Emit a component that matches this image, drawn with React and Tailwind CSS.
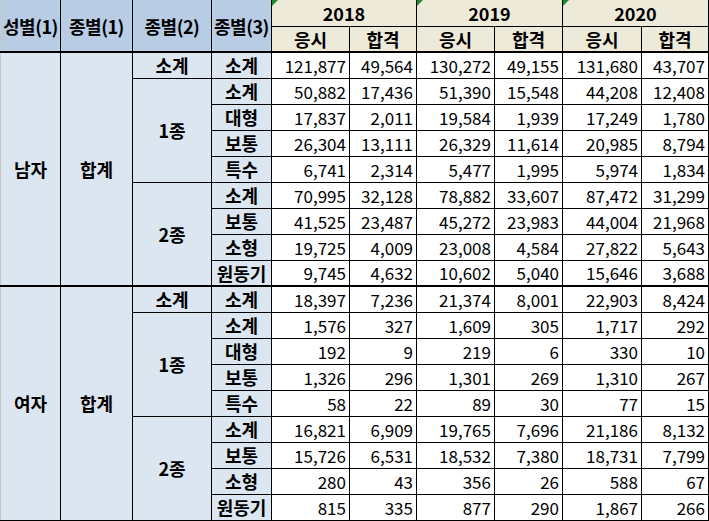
import React from 'react';

const years = ['2018', '2019', '2020'];

// [종별(2), 종별(3), values...]
const male = [
    ['소계', '소계', '121,877', '49,564', '130,272', '49,155', '131,680', '43,707'],
    ['1종', '소계', '50,882', '17,436', '51,390', '15,548', '44,208', '12,408'],
    ['1종', '대형', '17,837', '2,011', '19,584', '1,939', '17,249', '1,780'],
    ['1종', '보통', '26,304', '13,111', '26,329', '11,614', '20,985', '8,794'],
    ['1종', '특수', '6,741', '2,314', '5,477', '1,995', '5,974', '1,834'],
    ['2종', '소계', '70,995', '32,128', '78,882', '33,607', '87,472', '31,299'],
    ['2종', '보통', '41,525', '23,487', '45,272', '23,983', '44,004', '21,968'],
    ['2종', '소형', '19,725', '4,009', '23,008', '4,584', '27,822', '5,643'],
    ['2종', '원동기', '9,745', '4,632', '10,602', '5,040', '15,646', '3,688'],
];

const female = [
    ['소계', '소계', '18,397', '7,236', '21,374', '8,001', '22,903', '8,424'],
    ['1종', '소계', '1,576', '327', '1,609', '305', '1,717', '292'],
    ['1종', '대형', '192', '9', '219', '6', '330', '10'],
    ['1종', '보통', '1,326', '296', '1,301', '269', '1,310', '267'],
    ['1종', '특수', '58', '22', '89', '30', '77', '15'],
    ['2종', '소계', '16,821', '6,909', '19,765', '7,696', '21,186', '8,132'],
    ['2종', '보통', '15,726', '6,531', '18,532', '7,380', '18,731', '7,799'],
    ['2종', '소형', '280', '43', '356', '26', '588', '67'],
    ['2종', '원동기', '815', '335', '877', '290', '1,867', '266'],
];

const spans = { 0: 1, 1: 4, 5: 4 };

const label = 'border border-black bg-[#dce6f1] font-bold text-[18px] text-center align-middle whitespace-nowrap';
const num = 'border border-black bg-white text-[17px] text-right pr-[3px] align-middle';

const Group = ({ sex, rows }) => (
    <>
        {rows.map((r, i) => (
            <tr key={i} className="h-[26px]">
                {i === 0 && (
                    <>
                        <td rowSpan={rows.length} className={`${label} border-l-[#c8c8c8] border-t-2`}>{sex}</td>
                        <td rowSpan={rows.length} className={`${label} border-t-2`}>합계</td>
                    </>
                )}
                {spans[i] && (
                    <td rowSpan={spans[i]} className={`${label} ${i === 0 ? 'border-t-2' : ''}`}>{r[0]}</td>
                )}
                <td className={`${label} ${i === 0 ? 'border-t-2' : ''}`}>{r[1]}</td>
                {r.slice(2).map((v, j) => (
                    <td key={j} className={`${num} ${i === 0 ? 'border-t-2' : ''}`}>{v}</td>
                ))}
            </tr>
        ))}
    </>
);

export default function App() {
    return (
        <div className="w-[709px] h-[521px] bg-white overflow-hidden" style={{ fontFamily: '"Noto Sans CJK KR", "Noto Sans", sans-serif' }}>
            <table className="table-fixed border-collapse leading-none text-black">
                <colgroup>
                    <col className="w-[60px]" />
                    <col className="w-[72px]" />
                    <col className="w-[79px]" />
                    <col className="w-[60px]" />
                    <col className="w-[78px]" />
                    <col className="w-[67px]" />
                    <col className="w-[78px]" />
                    <col className="w-[68px]" />
                    <col className="w-[79px]" />
                    <col className="w-[67px]" />
                </colgroup>
                <thead>
                    <tr className="h-[26px]">
                        {['성별(1)', '종별(1)', '종별(2)', '종별(3)'].map((h, i) => (
                            <th key={h} rowSpan={2} className={`border border-black border-t-0 bg-[#b8cce4] font-bold text-[18px] tracking-[-0.5px] whitespace-nowrap ${i === 0 ? 'border-l-[#c8c8c8]' : ''}`}>{h}</th>
                        ))}
                        {years.map(y => (
                            <th key={y} colSpan={2} className="relative border border-black border-t-0 bg-[#eeead9] font-bold text-[18px]">
                                <span className="absolute left-0 top-0 w-0 h-0 border-t-[6px] border-r-[6px] border-t-[#1e8a2e] border-r-transparent" />
                                {y}
                            </th>
                        ))}
                    </tr>
                    <tr className="h-[26px]">
                        {years.map(y => (
                            <React.Fragment key={y}>
                                <th className="border border-black bg-[#eeead9] font-bold text-[18px]">응시</th>
                                <th className="border border-black bg-[#eeead9] font-bold text-[18px]">합격</th>
                            </React.Fragment>
                        ))}
                    </tr>
                </thead>
                <tbody>
                    <Group sex="남자" rows={male} />
                    <Group sex="여자" rows={female} />
                </tbody>
            </table>
        </div>
    );
}
